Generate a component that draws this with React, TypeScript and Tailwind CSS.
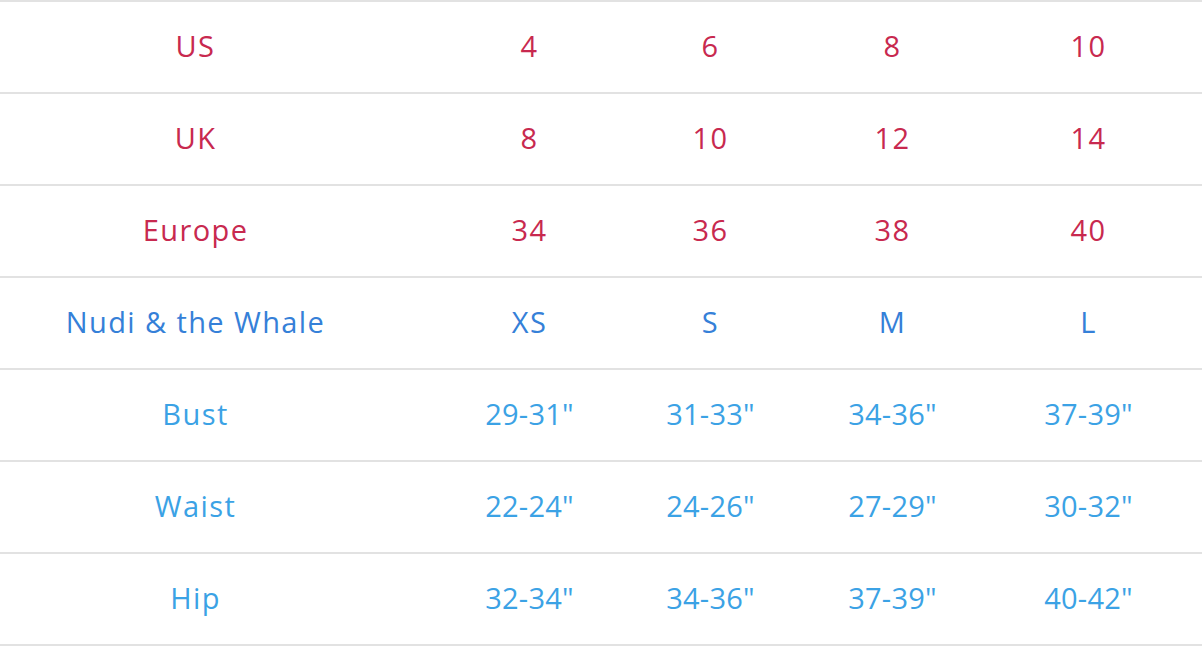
import React from "react";

const rows: { cells: string[]; color: string }[] = [
  { cells: ["US", "4", "6", "8", "10"], color: "text-[#c8294f]" },
  { cells: ["UK", "8", "10", "12", "14"], color: "text-[#c8294f]" },
  { cells: ["Europe", "34", "36", "38", "40"], color: "text-[#c8294f]" },
  { cells: ["Nudi & the Whale", "XS", "S", "M", "L"], color: "text-[#3580d8]" },
  { cells: ["Bust", '29-31"', '31-33"', '34-36"', '37-39"'], color: "text-[#3ba2e5]" },
  { cells: ["Waist", '22-24"', '24-26"', '27-29"', '30-32"'], color: "text-[#3ba2e5]" },
  { cells: ["Hip", '32-34"', '34-36"', '37-39"', '40-42"'], color: "text-[#3ba2e5]" },
];

export default function App() {
  return (
    <div
      className="w-[1202px] h-[646px] bg-white border-t-2 border-[#e2e2e2]"
      style={{ fontFamily: '"Open Sans", "Liberation Sans", sans-serif' }}
    >
      {rows.map((r, i) => (
        <div
          key={i}
          className={`grid grid-cols-[390px_278px_84px_280px_112px_1fr] h-[92px] border-b-2 border-[#e2e2e2] text-[29px] ${r.color}`}
        >
          {r.cells.map((c, j) => (
            <div
              key={j}
              className={`flex items-center justify-center whitespace-nowrap pb-[3px] pl-[1px] ${
                j > 0 && c.includes('"') ? "tracking-[0.2px]" : "tracking-[1.4px]"
              }`}
            >
              {c}
            </div>
          ))}
          <div />
        </div>
      ))}
    </div>
  );
}
